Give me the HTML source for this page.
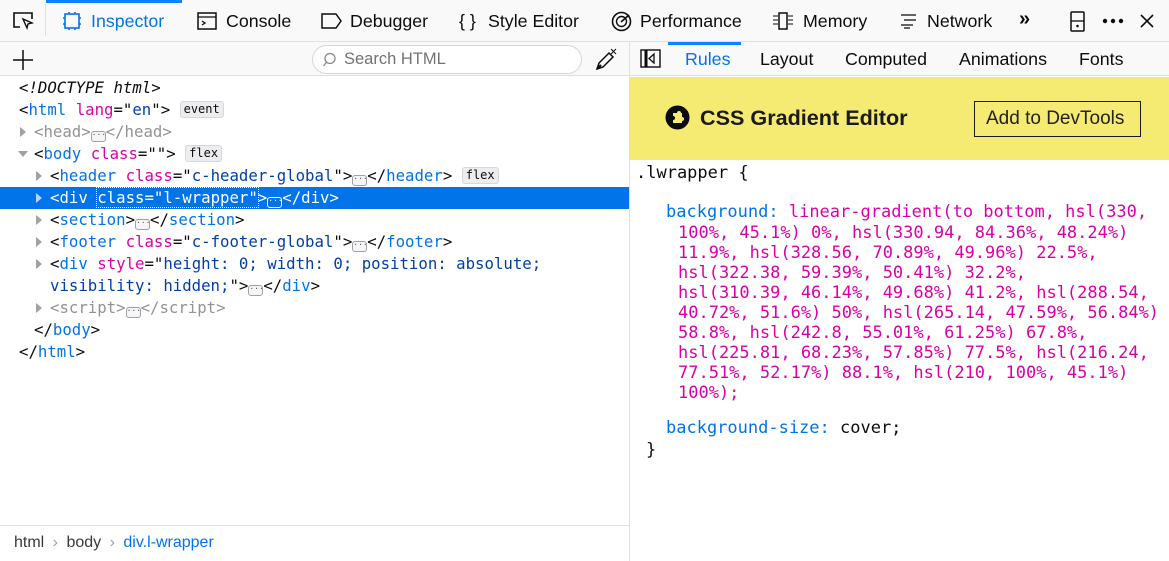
<!DOCTYPE html>
<html><head><style>
*{margin:0;padding:0;box-sizing:border-box}
body{width:1169px;height:561px;overflow:hidden;background:#fff;font-family:"Liberation Sans",Arial,sans-serif;position:relative;color:#0c0c0d}
.a{position:absolute;white-space:pre}
.tb{position:absolute;left:0;top:0;width:1169px;height:42px;background:#f9f9fa;border-bottom:1px solid #e0e0e2}
.tab{position:absolute;top:11px;font-size:17.8px;color:#0c0c0d}
.tb2{position:absolute;top:42px;height:34px;background:#f9f9fa;border-bottom:1px solid #e0e0e2}
.m{font-family:"DejaVu Sans Mono","Liberation Mono",monospace}
.L{font-size:15.7px;line-height:22px;color:#0c0c0d}
.t{color:#0074e8}.at{color:#dd00a9}.v{color:#003eaa}.g{color:#939395}
.badge{display:inline-block;font-family:"DejaVu Sans Mono",monospace;font-size:12px;line-height:15px;padding:0 3px;border:1px solid #d7d7db;background:#ededf0;border-radius:3px;color:#0c0c0d;vertical-align:2px}
.dots{display:inline-block;width:15px;height:11px;border:1px solid #a0a0a5;border-radius:3px;background:#f5f5f7;vertical-align:0px;font-size:8px;line-height:6px;text-align:center;color:#555}
.arr{position:absolute;left:-14px;top:6px;width:0;height:0;border-top:5px solid transparent;border-bottom:5px solid transparent;border-left:6px solid #a0a0a5}
.arrd{position:absolute;left:-16px;top:8px;width:0;height:0;border-left:5px solid transparent;border-right:5px solid transparent;border-top:6px solid #a0a0a5}
.R{font-size:17px;line-height:20px}
.p{color:#0074e8}.pv{color:#dd00a9}
</style></head><body>
<div class="tb"></div>
<div class="a" style="left:46px;top:0;width:136px;height:3px;background:#0a84ff"></div>
<div class="a" style="left:45px;top:4px;width:1px;height:32px;background:#e0e0e2"></div>
<svg class="a" style="left:12px;top:10px" width="24" height="22" viewBox="0 0 24 22"><path d="M8 17H2V3h18v6" fill="none" stroke="#0c0c0d" stroke-width="1.6"/><path d="M11 9l9 4-4 1-1 4z" fill="#fff" stroke="#0c0c0d" stroke-width="1.4"/></svg>
<svg class="a" style="left:62px;top:11px" width="20" height="20" viewBox="0 0 20 20"><rect x="3" y="3" width="14" height="14" fill="none" stroke="#0074e8" stroke-width="1.6"/><path d="M7 1v2M13 1v2M7 17v2M13 17v2M1 7h2M1 13h2M17 7h2M17 13h2" stroke="#0074e8" stroke-width="1.6"/></svg>
<div class="tab" style="left:91px;color:#0074e8">Inspector</div>
<svg class="a" style="left:197px;top:12px" width="20" height="18"><rect x="1" y="1" width="18" height="16" fill="none" stroke="#0c0c0d" stroke-width="1.5"/><path d="M1 5h18M5 9l3 2-3 2" fill="none" stroke="#0c0c0d" stroke-width="1.3"/></svg>
<div class="tab" style="left:226px">Console</div>
<svg class="a" style="left:321px;top:13px" width="22" height="16"><path d="M1 1h14l5 7-5 7H1z" fill="none" stroke="#0c0c0d" stroke-width="1.5"/></svg>
<div class="tab" style="left:350px">Debugger</div>
<div class="tab" style="left:459px">{ }</div>
<div class="tab" style="left:488px">Style Editor</div>
<svg class="a" style="left:611px;top:11px" width="21" height="21"><circle cx="10.5" cy="10.5" r="9" fill="none" stroke="#0c0c0d" stroke-width="1.6"/><circle cx="10.5" cy="10.5" r="5" fill="none" stroke="#0c0c0d" stroke-width="1.4"/><path d="M10 11L18 4" stroke="#0c0c0d" stroke-width="1.6"/></svg>
<div class="tab" style="left:640px">Performance</div>
<svg class="a" style="left:772px;top:11px" width="22" height="20"><rect x="7" y="2" width="8" height="16" fill="none" stroke="#0c0c0d" stroke-width="1.5"/><path d="M1 5h5M1 9h5M1 13h5M16 5h5M16 9h5M16 13h5" stroke="#0c0c0d" stroke-width="1"/></svg>
<div class="tab" style="left:803px">Memory</div>
<svg class="a" style="left:899px;top:13px" width="20" height="16"><path d="M2 2h15M5 7h12M2 12h12M5 15h6" stroke="#0c0c0d" stroke-width="1.3"/></svg>
<div class="tab" style="left:927px">Network</div>
<div class="tab" style="left:1019px;font-weight:bold;font-size:20px;top:8px">»</div>
<svg class="a" style="left:1070px;top:11px" width="16" height="21"><rect x="1" y="1" width="13" height="19" rx="1" fill="none" stroke="#0c0c0d" stroke-width="1.5"/><path d="M1 10h13" stroke="#0c0c0d" stroke-width="1.3"/><circle cx="7.5" cy="15" r="1.3" fill="#0c0c0d"/></svg>
<svg class="a" style="left:1102px;top:18px" width="22" height="6"><circle cx="3" cy="3" r="2.2" fill="#0c0c0d"/><circle cx="11" cy="3" r="2.2" fill="#0c0c0d"/><circle cx="19" cy="3" r="2.2" fill="#0c0c0d"/></svg>
<svg class="a" style="left:1139px;top:13px" width="16" height="16"><path d="M2 2l12 12M14 2L2 14" stroke="#0c0c0d" stroke-width="1.6"/></svg>

<div class="tb2" style="left:0;width:629px"></div>
<div class="tb2" style="left:630px;width:539px"></div>
<div class="a" style="left:629px;top:42px;width:1px;height:519px;background:#e0e0e2"></div>
<svg class="a" style="left:12px;top:49px" width="22" height="22"><path d="M11 1v20M1 11h20" stroke="#0c0c0d" stroke-width="1.5"/></svg>
<div class="a" style="left:312px;top:45px;width:270px;height:29px;border:1px solid #d7d7db;border-radius:15px;background:#fff"></div>
<svg class="a" style="left:323px;top:52px" width="16" height="16"><circle cx="7" cy="6.5" r="5" fill="none" stroke="#888" stroke-width="1.3"/><path d="M3.5 10l-3 4" stroke="#888" stroke-width="1.3"/></svg>
<div class="a" style="left:344px;top:50px;font-size:16.5px;color:#737373">Search HTML</div>
<svg class="a" style="left:594px;top:48px" width="24" height="24"><path d="M3 21l2-6 10-10 4 4-10 10z" fill="none" stroke="#0c0c0d" stroke-width="1.5"/><path d="M3 21l4-4" stroke="#0c0c0d" stroke-width="2"/><path d="M17 1l5 5M22 1l-5 5" stroke="#0c0c0d" stroke-width="1"/></svg>

<svg class="a" style="left:640px;top:49px" width="21" height="20"><rect x="1" y="1" width="19" height="17" fill="none" stroke="#0c0c0d" stroke-width="1.4"/><path d="M6 1v17" stroke="#0c0c0d" stroke-width="3"/><path d="M14 5l-5 4.5 5 4.5z" fill="none" stroke="#0c0c0d" stroke-width="1.3"/></svg>
<div class="a" style="left:668px;top:42px;width:73px;height:3px;background:#0a84ff"></div>
<div class="tab" style="left:685px;top:49px;color:#0074e8">Rules</div>
<div class="tab" style="left:760px;top:49px">Layout</div>
<div class="tab" style="left:845px;top:49px">Computed</div>
<div class="tab" style="left:959px;top:49px">Animations</div>
<div class="tab" style="left:1079px;top:49px">Fonts</div>

<!-- markup -->
<div class="a" style="left:0;top:187px;width:629px;height:22px;background:#0074e8"></div>
<div class="a m L" style="left:19px;top:77px"><span style="font-style:italic">&lt;!DOCTYPE html&gt;</span></div>
<div class="a m L" style="left:19px;top:99px">&lt;<span class="t">html</span> <span class="at">lang</span>="<span class="v">en</span>"&gt; <span class="badge">event</span></div>
<div class="a m L g" style="left:34px;top:121px"><span class="arr"></span>&lt;head&gt;<span class="dots">···</span>&lt;/head&gt;</div>
<div class="a m L" style="left:34px;top:143px"><span class="arrd"></span>&lt;<span class="t">body</span> <span class="at">class</span>=""&gt; <span class="badge">flex</span></div>
<div class="a m L" style="left:50px;top:165px"><span class="arr"></span>&lt;<span class="t">header</span> <span class="at">class</span>="<span class="v">c-header-global</span>"&gt;<span class="dots">···</span>&lt;/<span class="t">header</span>&gt; <span class="badge">flex</span></div>
<div class="a m L" style="left:50px;top:187px;color:#fff"><span class="arr" style="border-left-color:#b5d5fb"></span>&lt;div <span style="outline:1px dotted #fff">class="l-wrapper"</span>&gt;<span class="dots" style="background:#0074e8;border-color:#fff;color:#fff">···</span>&lt;/div&gt;</div>
<div class="a m L" style="left:50px;top:209px"><span class="arr"></span>&lt;<span class="t">section</span>&gt;<span class="dots">···</span>&lt;/<span class="t">section</span>&gt;</div>
<div class="a m L" style="left:50px;top:231px"><span class="arr"></span>&lt;<span class="t">footer</span> <span class="at">class</span>="<span class="v">c-footer-global</span>"&gt;<span class="dots">···</span>&lt;/<span class="t">footer</span>&gt;</div>
<div class="a m L" style="left:50px;top:253px"><span class="arr"></span>&lt;<span class="t">div</span> <span class="at">style</span>="<span class="v">height: 0; width: 0; position: absolute;</span></div>
<div class="a m L" style="left:50px;top:275px"><span class="v">visibility: hidden;</span>"&gt;<span class="dots">···</span>&lt;/<span class="t">div</span>&gt;</div>
<div class="a m L g" style="left:50px;top:297px"><span class="arr"></span>&lt;script&gt;<span class="dots">···</span>&lt;/script&gt;</div>
<div class="a m L" style="left:34px;top:319px">&lt;/<span class="t">body</span>&gt;</div>
<div class="a m L" style="left:19px;top:341px">&lt;/<span class="t">html</span>&gt;</div>

<div class="a" style="left:0;top:525px;width:629px;height:1px;background:#e0e0e2"></div>
<div class="a" style="left:14px;top:534px;font-size:16px;color:#38383d">html <span style="color:#a0a0a5;margin:0 4px">›</span> body <span style="color:#a0a0a5;margin:0 4px">›</span> <span style="color:#0074e8">div.l-wrapper</span></div>

<!-- rules -->
<div class="a" style="left:630px;top:77px;width:539px;height:83px;background:#f6eb72"></div>
<svg class="a" style="left:665px;top:105px" width="25" height="25"><circle cx="12.5" cy="12.5" r="12" fill="#0c0c0d"/><path d="M8 8h4a2 2 0 014 0h1v4a2 2 0 010 4v2H8v-3a2 2 0 000-4z" fill="#f6eb72"/></svg>
<div class="a" style="left:700px;top:105px;font-size:21.6px;font-weight:bold;color:#1a1a1a">CSS Gradient Editor</div>
<div class="a" style="left:974px;top:101px;width:167px;height:36px;border:1.5px solid #1a1a1a"></div>
<div class="a" style="left:986px;top:108px;font-size:19px;color:#222">Add to DevTools</div>

<div class="a m R" style="left:636px;top:163px">.lwrapper {</div>
<div class="a m R" style="left:666px;top:202px"><span class="p">background:</span> <span class="pv">linear-gradient(to bottom, hsl(330,</span></div>
<div class="a m R pv" style="left:678px;top:223px">100%, 45.1%) 0%, hsl(330.94, 84.36%, 48.24%)
11.9%, hsl(328.56, 70.89%, 49.96%) 22.5%,
hsl(322.38, 59.39%, 50.41%) 32.2%,
hsl(310.39, 46.14%, 49.68%) 41.2%, hsl(288.54,
40.72%, 51.6%) 50%, hsl(265.14, 47.59%, 56.84%)
58.8%, hsl(242.8, 55.01%, 61.25%) 67.8%,
hsl(225.81, 68.23%, 57.85%) 77.5%, hsl(216.24,
77.51%, 52.17%) 88.1%, hsl(210, 100%, 45.1%)
100%);</div>
<div class="a m R" style="left:666px;top:418px"><span class="p">background-size:</span> cover;</div>
<div class="a m R" style="left:646px;top:440px">}</div>
</body></html>
